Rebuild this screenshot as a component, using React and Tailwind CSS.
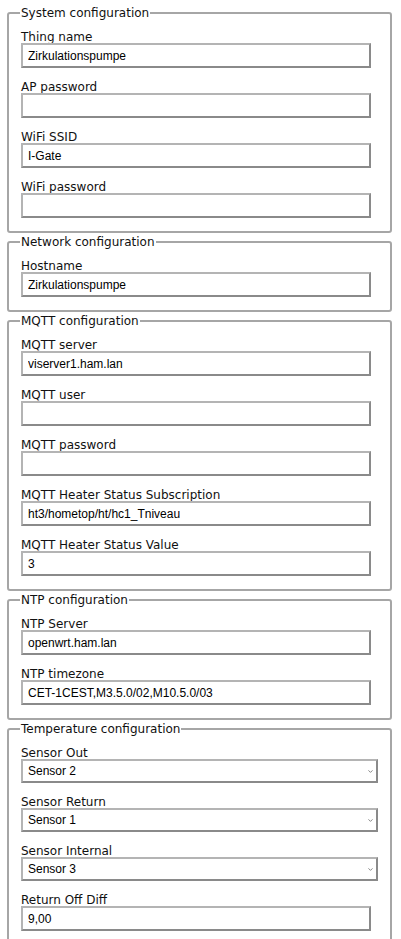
import { ChevronDown } from "lucide-react";

const SECTIONS = [
  {
    title: "System configuration",
    fields: [
      { label: "Thing name", value: "Zirkulationspumpe" },
      { label: "AP password", value: "" },
      { label: "WiFi SSID", value: "I-Gate" },
      { label: "WiFi password", value: "" },
    ],
  },
  {
    title: "Network configuration",
    fields: [{ label: "Hostname", value: "Zirkulationspumpe" }],
  },
  {
    title: "MQTT configuration",
    fields: [
      { label: "MQTT server", value: "viserver1.ham.lan" },
      { label: "MQTT user", value: "" },
      { label: "MQTT password", value: "" },
      { label: "MQTT Heater Status Subscription", value: "ht3/hometop/ht/hc1_Tniveau" },
      { label: "MQTT Heater Status Value", value: "3" },
    ],
  },
  {
    title: "NTP configuration",
    fields: [
      { label: "NTP Server", value: "openwrt.ham.lan" },
      { label: "NTP timezone", value: "CET-1CEST,M3.5.0/02,M10.5.0/03" },
    ],
  },
  {
    title: "Temperature configuration",
    fields: [
      { label: "Sensor Out", value: "Sensor 2", select: true },
      { label: "Sensor Return", value: "Sensor 1", select: true },
      { label: "Sensor Internal", value: "Sensor 3", select: true },
      { label: "Return Off Diff", value: "9,00" },
    ],
  },
];

const SENSORS = ["Sensor 1", "Sensor 2", "Sensor 3"];

function Field({ label, value, select }) {
  return (
    <div className="flex flex-col">
      <label className="block text-[12px] leading-[11px] text-[#111]">{label}</label>
      {select ? (
        <div className="relative w-full">
          <select
            defaultValue={value}
            className="block h-[24px] w-full appearance-none border-2 border-[#b4b4b4] border-r-[#8a8a8a] border-b-[#8a8a8a] bg-white pl-[5px] text-[12px] text-black outline-none font-['Liberation_Sans',Arial,sans-serif]"
          >
            {SENSORS.map((s) => (
              <option key={s}>{s}</option>
            ))}
          </select>
          <ChevronDown
            className="pointer-events-none absolute right-[4px] top-[9px] h-[7px] w-[7px] text-[#777]"
            strokeWidth={3}
          />
        </div>
      ) : (
        <input
          type="text"
          defaultValue={value}
          className="block h-[25px] w-[350px] border-2 border-[#b4b4b4] border-r-[#8a8a8a] border-b-[#8a8a8a] bg-white pl-[5px] text-[12px] text-black outline-none font-['Liberation_Sans',Arial,sans-serif]"
        />
      )}
    </div>
  );
}

export default function App() {
  return (
    <div className="min-h-screen bg-white pt-[6px] pl-[7px] font-['DejaVu_Sans',Verdana,sans-serif] text-[#111]">
      <div className="flex w-[385px] flex-col gap-[2px]">
        {SECTIONS.map((sec) => (
          <fieldset
            key={sec.title}
            className="rounded-[3px] border-2 border-[#a6a6a6] px-[12px] pt-[12px] pb-[13px]"
          >
            <legend className="-ml-[1px] px-[1px] text-[12px] leading-[14px] text-[#111]">
              {sec.title}
            </legend>
            <div className="flex flex-col gap-[14px]">
              {sec.fields.map((f) => (
                <Field key={f.label} {...f} />
              ))}
            </div>
          </fieldset>
        ))}
      </div>
    </div>
  );
}
